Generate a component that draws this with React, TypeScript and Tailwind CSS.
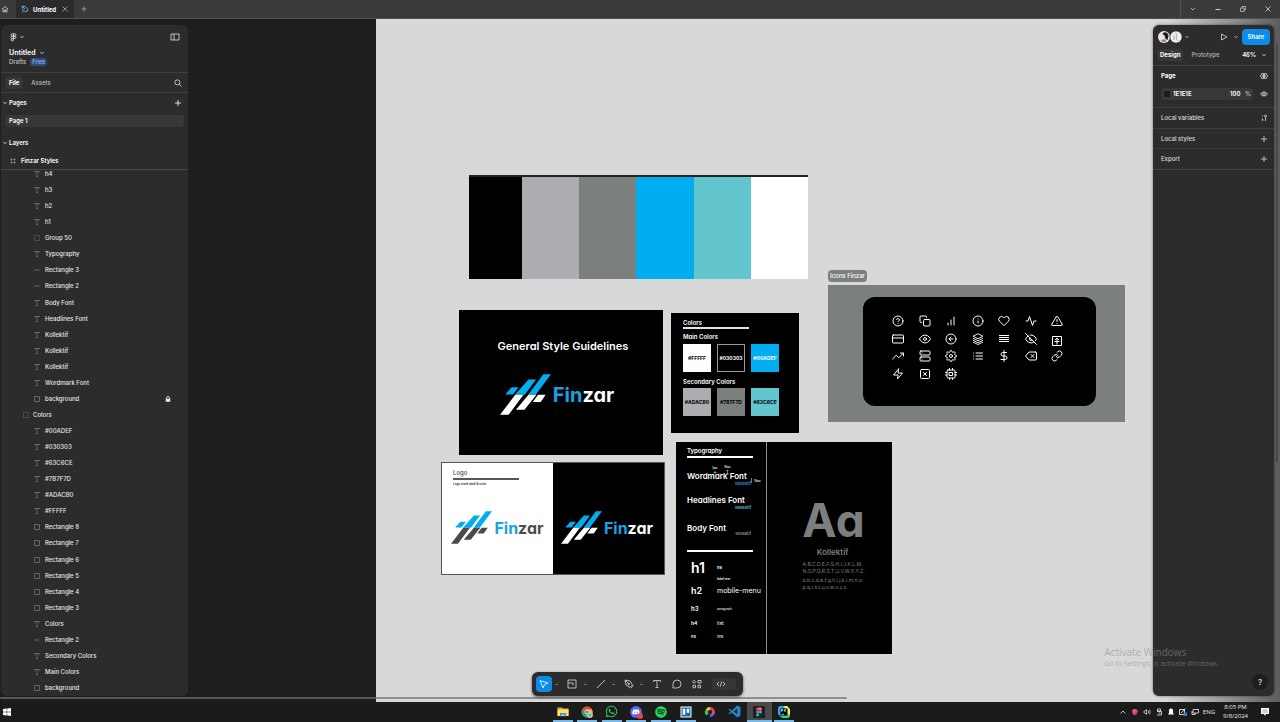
import React from "react";
import {
  FiActivity, FiAlertTriangle, FiArrowLeftCircle, FiBarChart, FiCopy, FiCpu, FiCreditCard,
  FiDelete, FiDollarSign, FiEye, FiEyeOff, FiHeart, FiHelpCircle, FiInfo, FiLink, FiList, FiServer,
  FiSettings, FiTrendingUp, FiXSquare, FiZap,
} from "react-icons/fi";
import { FaDiscord, FaSpotify, FaTrello, FaWhatsapp } from "react-icons/fa";

type Kind = "text" | "rect" | "group" | "line";
type Layer = { name: string; kind: Kind; top?: boolean; locked?: boolean };

const layers: Layer[] = [
  { name: "h4", kind: "text" },
  { name: "h3", kind: "text" },
  { name: "h2", kind: "text" },
  { name: "h1", kind: "text" },
  { name: "Group 50", kind: "group" },
  { name: "Typography", kind: "text" },
  { name: "Rectangle 3", kind: "line" },
  { name: "Rectangle 2", kind: "line" },
  { name: "Body Font", kind: "text" },
  { name: "Headlines Font", kind: "text" },
  { name: "Kollektif", kind: "text" },
  { name: "Kollektif", kind: "text" },
  { name: "Kollektif", kind: "text" },
  { name: "Wordmark Font", kind: "text" },
  { name: "background", kind: "rect", locked: true },
  { name: "Colors", kind: "group", top: true },
  { name: "#00ADEF", kind: "text" },
  { name: "#030303", kind: "text" },
  { name: "#63C6CE", kind: "text" },
  { name: "#7B7F7D", kind: "text" },
  { name: "#ADACB0", kind: "text" },
  { name: "#FFFFF", kind: "text" },
  { name: "Rectangle 8", kind: "rect" },
  { name: "Rectangle 7", kind: "rect" },
  { name: "Rectangle 6", kind: "rect" },
  { name: "Rectangle 5", kind: "rect" },
  { name: "Rectangle 4", kind: "rect" },
  { name: "Rectangle 3", kind: "rect" },
  { name: "Colors", kind: "text" },
  { name: "Rectangle 2", kind: "line" },
  { name: "Secondary Colors", kind: "text" },
  { name: "Main Colors", kind: "text" },
  { name: "background", kind: "rect" },
];

const kindPaths: Record<Kind, string> = {
  text: "M1.5 2.5v-1h5v1M4 1.5v5M3 6.5h2",
  rect: "M1.5 1.5h5v5h-5z",
  group: "M1.5 1.5h5v5h-5z",
  line: "M1.5 4h5",
};

function Glyph({ d, box = 8, className = "size-2", width = 1 }: { d: string; box?: number; className?: string; width?: number }) {
  return (
    <svg viewBox={`0 0 ${box} ${box}`} className={`shrink-0 ${className}`} fill="none" stroke="currentColor" strokeWidth={width} aria-hidden="true">
      <path d={d} />
    </svg>
  );
}

function Chevron({ className = "size-1" }: { className?: string }) {
  return <Glyph box={4} d="M.5 1.2 2 2.7 3.5 1.2" width={0.8} className={className} />;
}

function Plus() {
  return <Glyph d="M4 1v6M1 4h6" width={0.8} />;
}

function LayerRow({ layer }: { layer: Layer }) {
  return (
    <li className="flex min-h-3 flex-1">
      <button type="button" className={`flex w-full items-center gap-[3px] pr-4 text-left font-medium ${layer.top ? "pl-[21px]" : "pl-8"}`}>
        <svg viewBox="0 0 8 8" className="size-2 shrink-0 text-[#808080]" fill="none" stroke="currentColor" strokeWidth="0.7" strokeDasharray={layer.kind === "group" ? "1 1" : undefined} aria-hidden="true">
          <path d={kindPaths[layer.kind]} />
        </svg>
        <span className={layer.top ? "flex-1" : "ml-px flex-1"}>{layer.name}</span>
        {layer.locked && (
          <svg viewBox="0 0 8 8" className="size-2" aria-hidden="true">
            <path d="M2.6 4V2.9a1.4 1.4 0 0 1 2.8 0V4" fill="none" stroke="#e6e6e6" strokeWidth="0.9" />
            <path d="M1.7 3.8h4.6v3H1.7z" fill="#e6e6e6" />
          </svg>
        )}
      </button>
    </li>
  );
}

function TitleBar() {
  return (
    <header className="flex h-[19px] shrink-0 items-stretch border-b border-[#505050] bg-[#3a3a3a] text-[6px] text-[#d0d0d0]">
      <button type="button" aria-label="Home" className="flex w-4 items-center pl-px">
        <Glyph d="M1 4.2 4 1.4l3 2.8M2 3.5V7h1.4V5h1.3v2H6V3.5" width={0.8} />
      </button>
      <div className="flex w-[58px] items-center bg-[#2b2b2b] pl-[5px] text-white">
        <svg viewBox="0 0 8 8" className="size-2" fill="none" stroke="#6fb5e8" strokeWidth="0.8" aria-hidden="true">
          <path d="M1 1l3.600.8 2.400 3L5 7 2 5.200zM1 1l3 3M5 7l2.500-2.200M1 6.500l1.500.8" />
        </svg>
        <span className="ml-1 flex-1 font-bold">Untitled</span>
        <button type="button" aria-label="Close tab" className="mr-[5px] text-[#c0c0c0]"><Glyph d="M1.500 1.500l5 5M6.500 1.500l-5 5" width={0.7} /></button>
      </div>
      <button type="button" aria-label="New tab" className="ml-[6px] text-[#b5b5b5]"><Glyph d="M4 1.5v5M1.5 4h5" width={0.7} /></button>
      <div className="ml-auto flex items-center gap-[17px] border-l border-[#555] pr-2 pl-2">
        <button type="button" aria-label="More"><Glyph d="M2 3l2 2 2-2" width={0.7} /></button>
        <button type="button" aria-label="Minimize"><Glyph d="M1.5 4.5h5" /></button>
        <button type="button" aria-label="Restore"><Glyph d="M1.5 3h3.5v3.5H1.5zM3 3V1.5h3.5V5H5" width={0.7} /></button>
        <button type="button" aria-label="Close"><Glyph d="M1.5 1.5l5 5M6.5 1.5l-5 5" width={0.8} /></button>
      </div>
    </header>
  );
}

function LeftPanel() {
  return (
    <aside className="pointer-events-auto ml-px flex w-[187px] flex-col overflow-hidden rounded-md bg-[#2c2c2c] text-[6px] leading-2 text-[#e6e6e6]">
      <div className="flex h-12 flex-col border-b border-[#3d3d3d] px-2 pt-2">
        <div className="flex h-2 items-center justify-between">
          <button type="button" aria-label="Main menu" className="flex items-center gap-[2px]">
            <svg viewBox="0 0 9 9" className="size-[9px]" fill="none" stroke="currentColor" strokeWidth="0.8" aria-hidden="true">
              <path d="M4.5.8H3.2a1.2 1.2 0 0 0 0 2.4h1.3zM4.5.8h1.3a1.2 1.2 0 0 1 0 2.4H4.5zM4.5 3.2H3.2a1.2 1.2 0 0 0 0 2.4h1.3zM4.5 5.6H3.2a1.2 1.2 0 1 0 1.3 1.2z" />
              <circle cx="5.8" cy="4.4" r="1.2" />
            </svg>
            <Chevron />
          </button>
          <button type="button" aria-label="Toggle sidebar">
            <Glyph box={10} className="size-[10px]" d="M1 2h8v6H1zM4 2v6" width={0.8} />
          </button>
        </div>
        <div className="mt-2 flex items-center gap-1 text-[7px] font-semibold text-white">Untitled <Chevron /></div>
        <div className="mt-px flex items-center gap-1 text-[#c4c4c4]">
          Drafts <span className="rounded-sm bg-[#324b79] px-[2px] text-[#7cc0f5]">Free</span>
        </div>
      </div>
      <div className="flex h-5 items-center border-b border-[#3d3d3d] px-1">
        <button type="button" className="rounded-sm bg-[#373737] px-1 py-[2px] font-bold text-white">File</button>
        <button type="button" className="ml-2 text-[#bdbdbd]">Assets</button>
        <button type="button" aria-label="Search" className="mr-[2px] ml-auto"><Glyph d="M5.9 3.4a2.5 2.5 0 1 1-5 0 2.500 2.500 0 0 1 5 0zM5.200 5.200 7.500 7.500" width={0.8} /></button>
      </div>
      <div className="flex h-5 items-center pr-[6px] pl-[2px] font-semibold text-white">
        <Chevron /><span className="ml-[2px] flex-1">Pages</span>
        <button type="button" aria-label="Add page"><Plus /></button>
      </div>
      <button type="button" className="mx-1 mt-[2px] rounded-sm bg-[#383838] px-1 py-[2px] text-left font-semibold text-white">Page 1</button>
      <div className="mt-[6px] flex h-5 items-center pl-[2px] font-semibold text-white"><Chevron /><span className="ml-[2px]">Layers</span></div>
      <button type="button" className="flex h-[17px] items-center gap-1 border-b border-[#484848] pl-2 text-left font-semibold text-white">
        <span className="text-[#9a9a9a]"><Glyph d="M2.5 1v6M5.5 1v6M1 2.5h6M1 5.5h6" width={0.5} /></span>Finzar Styles
      </button>
      <div className="flex min-h-0 flex-1 flex-col overflow-hidden">
        <ul className="-mt-1 flex flex-1 flex-col">
          {layers.map((l, i) => <LayerRow key={i} layer={l} />)}
        </ul>
      </div>
    </aside>
  );
}

function RightPanel() {
  return (
    <aside className="pointer-events-auto mr-[6px] flex w-[121px] flex-col rounded-md bg-[#2c2c2c] text-[6px] leading-2 text-[#dcdcdc] shadow-[0_0_3px_rgba(0,0,0,0.5)]">
      <div className="flex h-[23px] items-center pr-1 pl-1">
        <svg viewBox="0 0 26 14" className="h-[14px] w-[26px]" aria-hidden="true">
          <circle cx="7" cy="7" r="6" fill="#e9e4df" />
          <path d="M5.500 4c1-3 6-2 6 2l-1 4-2-1-1-3.500z" fill="#221d1b" />
          <path d="M4 10.500c2 2 4 2 5.500.5l-2.500-2z" fill="#8d8078" />
          <circle cx="19" cy="7" r="6" fill="#f1f1f1" stroke="#2c2c2c" strokeWidth="0.6" />
          <path d="M18 3c3 0 2 3 1 5l2 3M17 5v5" fill="none" stroke="#8c8c8c" strokeWidth="0.8" />
        </svg>
        <span className="ml-[2px]"><Chevron /></span>
        <button type="button" aria-label="Present" className="mr-[6px] ml-auto"><Glyph d="M1.5 1 7 4 1.5 7z" width={0.8} /></button>
        <Chevron />
        <button type="button" className="ml-1 h-4 w-7 rounded-sm bg-[#0c8ce9] font-semibold text-white">Share</button>
      </div>
      <div className="flex h-[18px] items-center border-b border-[#3f3f3f] pr-2 pb-[3px] pl-1">
        <button type="button" className="rounded-sm bg-[#383838] px-[3px] py-[2px] font-bold text-white">Design</button>
        <button type="button" className="ml-2 text-[#b5b5b5]">Prototype</button>
        <button type="button" className="ml-auto flex items-center gap-[6px] font-semibold text-white">46% <Chevron /></button>
      </div>
      <div className="flex h-[42px] flex-col border-b border-[#3f3f3f] pt-[6px] pr-[6px] pl-2">
        <div className="flex items-center justify-between font-bold text-white">
          Page
          <Glyph d="M3.5 1.500H1.800L.5 4l1.300 2.500h1.700zM4.500 1.500h1.700L7.500 4 6.200 6.500H4.500zM2 4h1.500M4.500 4H6" width={0.7} />
        </div>
        <div className="mt-2 flex items-center justify-between">
          <div className="flex h-3 w-[92px] items-center rounded-sm bg-[#383838] font-semibold text-white">
            <span className="ml-[3px] size-[6px] rounded-[1px] bg-[#1e1e1e]" />
            <input aria-label="Page color" defaultValue="1E1E1E" className="ml-[3px] w-[52px] min-w-0 bg-transparent outline-none" />
            <input aria-label="Opacity" defaultValue="100" className="w-5 min-w-5 border-l border-[#2c2c2c] bg-transparent pl-1 outline-none" />
            <span className="text-[#bdbdbd]">%</span>
          </div>
          <button type="button" aria-label="Toggle visibility"><Glyph d="M.5 4C2 1.5 6 1.5 7.5 4 6 6.5 2 6.5.5 4zM5.2 4a1.2 1.2 0 1 1-2.4 0 1.2 1.2 0 0 1 2.4 0z" width={0.8} /></button>
        </div>
      </div>
      <div className="flex h-[21px] items-center justify-between border-b border-[#3f3f3f] pr-[6px] pl-2">
        Local variables
        <button type="button" aria-label="Variables"><Glyph d="M2.5 4.5v2M2.5 1.5v1M5.5 3.5V7M4.5 2.2a1 1 0 1 1 2 0 1 1 0 0 1-2 0zM1.8 6h1.5" width={0.8} /></button>
      </div>
      <div className="flex h-5 items-center justify-between border-b border-[#353535] pr-[6px] pl-2">
        Local styles
        <button type="button" aria-label="Add style"><Plus /></button>
      </div>
      <div className="flex h-[21px] items-center justify-between border-b border-[#3f3f3f] pr-[6px] pl-2">
        Export
        <button type="button" aria-label="Add export"><Plus /></button>
      </div>
      <button type="button" aria-label="Help" className="mt-auto mr-[6px] mb-[6px] size-4 self-end rounded-full bg-[#1e1e1e] text-[8px] font-medium">?</button>
    </aside>
  );
}

function Mark({ base, className }: { base: string; className: string }) {
  return (
    <svg viewBox="0 0 154 124" className={className} aria-hidden="true">
      <path fill="#00adef" d="M35 40h21L39 62H16zM86 17h23L75 63H45zM131 1h23l-46 62H85z" />
      <path fill={base} d="M46 63h25L26 123H0zM86 63h24l-36 45H48zM115 63h23l-15 22H99z" />
    </svg>
  );
}

function Brand({ dark, big }: { dark: boolean; big?: boolean }) {
  return (
    <div className={`flex items-center justify-center gap-[2px] font-bold ${big ? "text-[20px]" : "text-[16px]"}`}>
      <Mark base={dark ? "#ffffff" : "#4d494b"} className={big ? "h-[41px] w-[51px]" : "h-[33px] w-[41px]"} />
      <span className={dark ? "text-white" : "text-[#4d494b]"}><span className="text-[#16a3e0]">Fin</span>zar</span>
    </div>
  );
}

function LayersStack() {
  return (
    <svg viewBox="0 0 24 24" className="size-3" fill="none" stroke="currentColor" strokeWidth="1.8" strokeLinejoin="round" aria-hidden="true">
      <path d="M12 1.5 2 6.5l10 5 10-5zM2 10.5l10 5 10-5M2 14.5l10 5 10-5M2 18l10 5 10-5" />
    </svg>
  );
}

function Lines() {
  return (
    <svg viewBox="0 0 12 12" className="size-3" fill="none" stroke="currentColor" strokeWidth="1" aria-hidden="true">
      <path d="M1 2.5h10M1 4.500h10M1 6.500h10M1 8.500h10" />
    </svg>
  );
}

function DepositBox() {
  return (
    <svg viewBox="0 0 12 12" className="mt-[2px] size-3" fill="none" stroke="currentColor" strokeWidth="1" aria-hidden="true">
      <path d="M1.5 1.500h9v9h-9zM6 3v6.500M3.500 6.500h5M4 5l2-2 2 2" />
    </svg>
  );
}

function IconBoard() {
  const c = "size-3";
  return (
    <div className="grid grid-cols-[repeat(7,12px)] content-between justify-between text-white">
      <FiHelpCircle className={c} /><FiCopy className={c} /><FiBarChart className={c} /><FiInfo className={c} /><FiHeart className={c} /><FiActivity className={c} /><FiAlertTriangle className={c} />
      <FiCreditCard className={c} /><FiEye className={c} /><FiArrowLeftCircle className={c} /><LayersStack /><Lines /><FiEyeOff className={c} /><div className="h-3"><DepositBox /></div>
      <FiTrendingUp className={c} /><FiServer className={c} /><FiSettings className={c} /><FiList className={c} /><FiDollarSign className={c} /><FiDelete className={c} /><FiLink className={c} />
      <FiZap className={c} /><FiXSquare className={c} /><FiCpu className={c} />
    </div>
  );
}

function Canvas() {
  return (
    <main className="relative overflow-hidden bg-[#1e1e1e] [grid-area:1/1]">
      <div className="absolute inset-y-0 right-0 left-[376px] bg-[#d8d8d8]" />
      <div className="absolute inset-y-0 right-0 w-[115px] bg-linear-to-r from-transparent to-[#5c5c5c]" />
      <div className="font-['Inter',sans-serif] [font-feature-settings:'cv11']">
        <section className="absolute top-[156px] left-[469px] grid h-[104px] w-[339px] grid-cols-[53px_repeat(5,1fr)] border-t-2 border-[#222]">
          <div className="bg-black" /><div className="bg-[#adacb0]" /><div className="bg-[#7b7f7d]" /><div className="bg-[#00adef]" /><div className="bg-[#63c6ce]" /><div className="bg-white" />
        </section>

        <section className="absolute top-[291px] left-[459px] flex h-[145px] w-[204px] flex-col items-center bg-black pt-7 pl-1 text-white">
          <h2 className="text-[11px] leading-4 font-semibold">General Style Guidelines</h2>
          <div className="mt-5 mr-3"><Brand dark big /></div>
        </section>

        <section className="absolute top-[294px] left-[671px] flex h-[120px] w-[128px] flex-col bg-black pt-[6px] pl-3 text-[6px] leading-2 font-semibold text-white">
          <h2>Colors</h2>
          <div className="h-[2px] w-[66px] bg-[#dfe6e6]" />
          <h3 className="mt-1">Main Colors</h3>
          <div className="mt-[3px] flex gap-[6px] text-[5px] font-bold">
            <div className="flex size-7 items-center justify-center bg-white text-black">#FFFFF</div>
            <div className="flex size-7 items-center justify-center border border-[#999]">#030303</div>
            <div className="flex size-7 items-center justify-center bg-[#00adef]">#00ADEF</div>
          </div>
          <h3 className="mt-[6px]">Secondary Colors</h3>
          <div className="mt-[2px] flex gap-[6px] text-[5px] font-bold text-black">
            <div className="flex size-7 items-center justify-center bg-[#adacb0]">#ADACB0</div>
            <div className="flex size-7 items-center justify-center bg-[#7b7f7d]">#7B7F7D</div>
            <div className="flex size-7 items-center justify-center bg-[#63c6ce]">#63C6CE</div>
          </div>
        </section>

        <section className="absolute top-[443px] left-[441px] grid h-[113px] w-[224px] grid-cols-2 border border-[#555]">
          <div className="flex flex-col bg-white pt-[6px] text-[#4d494b]">
            <div className="pl-[11px]">
              <h2 className="text-[6px] leading-2 font-medium">Logo</h2>
              <div className="mt-px h-[2px] w-[66px] bg-[#5a5658]" />
              <p className="text-[3px] leading-2 text-black">Logo mark dark &amp; color</p>
            </div>
            <div className="mt-[23px]"><Brand dark={false} /></div>
          </div>
          <div className="flex flex-col bg-black pt-[48px] pr-[3px]"><Brand dark /></div>
        </section>

        <section className="absolute top-[423px] left-[676px] flex h-[212px] w-[216px] bg-black text-white">
          <div className="relative flex w-[91px] shrink-0 flex-col border-r border-[#8a8d8b] pt-[5px] pl-[11px]">
            <h2 className="text-[6px] leading-2 font-semibold">Typography</h2>
            <div className="mt-px h-[2px] w-[66px] bg-white" />
            <div className="mt-[14px] flex w-[64px] flex-col whitespace-nowrap">
              <span className="text-[8px] leading-2 font-semibold">Wordmark Font</span>
              <span className="self-end text-[4px] leading-2 font-semibold text-[#1ca4e4]">Kollektif</span>
              <span className="mt-2 text-[8px] leading-2 font-semibold">Headlines Font</span>
              <span className="self-end text-[4px] leading-2 font-semibold text-[#63c6ce]">Kollektif</span>
              <span className="mt-3 text-[8px] leading-2 font-semibold">Body Font</span>
              <span className="-mt-[2px] self-end text-[4px] leading-2 text-[#adacb0]">Kollektif</span>
            </div>
            <div className="mt-3 h-[2px] w-[66px] bg-white" />
            <div className="mt-2 grid grid-cols-[26px_1fr] items-center pl-1 text-[4px] leading-1 font-semibold whitespace-nowrap">
              <span className="text-[14px] leading-4">h1</span><span>h6</span>
              <span className="h-[7px]" /><span className="h-[7px] text-[3px] leading-[7px]">label text</span>
              <span className="text-[9px] leading-4">h2</span><span className="text-[7px] leading-4 font-normal">mobile-menu</span>
              <span className="mt-1 text-[6px] leading-3">h3</span><span className="mt-1 text-[3px] font-normal">paragraph</span>
              <span className="text-[5px] leading-4">h4</span><span className="text-[5px] font-normal">list</span>
              <span className="text-[4px] leading-3">h5</span><span className="font-normal">link</span>
            </div>
            <span className="absolute top-[24px] left-[36px] text-[3px] leading-1">3px</span>
            <span className="absolute top-[23px] left-[48px] text-[3px] leading-1">16px</span>
            <svg viewBox="0 0 40 16" className="absolute top-[28px] left-[36px] h-4 w-10" fill="none" stroke="#cfcfcf" strokeWidth="0.6" aria-hidden="true">
              <path d="M3 1v3M1.5 2.5h3M15.5 0v4M14 0h3M14 4h3" /><path d="M39.5 8v5" />
            </svg>
            <span className="absolute top-[37px] left-[78px] text-[3px] leading-1">16px</span>
          </div>
          <div className="flex flex-1 flex-col items-center pt-[55px] pl-4 text-[#7b7f7d]">
            <div className="mr-[8px] text-[46px] leading-[46px] font-bold">Aa</div>
            <div className="mr-[10px] text-[8px] leading-[18px] font-semibold">Kollektif</div>
            <div className="w-[70px] text-[5px] leading-[7px] font-normal whitespace-nowrap">
              <p>A.B.C.D.E.F.G.H.I.J.K.L.M.</p>
              <p>N.O.P.Q.R.S.T.U.V.W.X.Y.Z.</p>
              <p className="mt-[2px]">a.b.c.d.e.f.g.h.i.j.k.l.m.n.o.</p>
              <p>p.q.r.s.t.u.v.w.x.y.z.</p>
            </div>
          </div>
        </section>
      </div>

      <span className="absolute top-[251px] left-[828px] rounded-sm bg-[#7b7f7d] px-[2px] py-[2px] text-[6px] leading-2 text-white">Icons Finzar</span>
      <section className="absolute top-[266px] left-[828px] flex h-[137px] w-[297px] bg-[#7b7f7d] pt-3 pr-[29px] pb-4 pl-[35px]">
        <div className="grid flex-1 rounded-xl bg-black pt-[18px] pr-[33px] pb-[26px] pl-[29px]"><IconBoard /></div>
      </section>

      <div className="absolute right-0 bottom-[3px] left-0 h-[2px] pr-[433px]"><div className="h-full rounded-full bg-[#707070]/70" /></div>
      <div className="absolute top-6 right-[2px] bottom-[35%] w-[2px] rounded-full bg-[#4a4a4a]" />
    </main>
  );
}

function Toolbar() {
  return (
    <div className="pointer-events-none absolute inset-x-0 bottom-[6px] flex justify-center pr-[5px]">
      <nav className="pointer-events-auto flex h-6 w-[211px] items-center rounded-md bg-[#2c2c2c] pl-1 text-[#dcdcdc] shadow-[0_1px_3px_rgba(0,0,0,0.6)]">
        <button type="button" aria-label="Move" className="flex size-4 items-center justify-center rounded-sm bg-[#0c8ce9] text-white"><Glyph box={10} className="size-[10px]" d="M1 1.5l8 2.5-3.5 1.500L4 9z" width={0.8} /></button>
        <span className="ml-[3px]"><Chevron className="size-[3px]" /></span>
        <button type="button" aria-label="Frame" className="ml-[9px]"><Glyph box={10} className="size-[10px]" d="M1 1h8v8H1zM1 4h5v2.5" width={0.8} /></button>
        <span className="ml-[7px]"><Chevron className="size-[3px]" /></span>
        <button type="button" aria-label="Line" className="ml-[9px]"><Glyph box={10} className="size-[10px]" d="M1 9 9 1" width={0.8} /></button>
        <span className="ml-[6px]"><Chevron className="size-[3px]" /></span>
        <button type="button" aria-label="Pen" className="ml-[9px]"><Glyph box={10} className="size-[10px]" d="M1 1l5 1 2.5 4L6 8.5 2 6zM1 1l3.5 3.5M5.5 5a.8.8 0 1 1-1.6 0 .8.8 0 0 1 1.6 0zM6.5 9.3 9.3 6.5" width={0.8} /></button>
        <span className="ml-[6px]"><Chevron className="size-[3px]" /></span>
        <button type="button" aria-label="Text" className="ml-[9px]"><Glyph box={10} className="size-[10px]" d="M1.5 3V1.5h7V3M5 1.5v7M3.5 8.5h3" width={0.8} /></button>
        <button type="button" aria-label="Comment" className="ml-[10px]"><Glyph box={10} className="size-[10px]" d="M1 9V5a4 4 0 1 1 4 4z" width={0.8} /></button>
        <button type="button" aria-label="Actions" className="ml-[10px]"><Glyph box={10} className="size-[10px]" d="M.5 2.800l1.600-1.600 1.600 1.600-1.600 1.600zM6 1.500h3v2.500H6zM1 6.300h2.500v2.500H1zM6 6.300h2.500v2.500H6z" width={0.8} /></button>
        <button type="button" aria-label="Dev mode" className="ml-[10px] flex h-3 w-[24px] items-center rounded-sm bg-[#363636] pl-1"><Glyph box={10} className="size-[10px]" d="M3 3 1 5l2 2M7 3l2 2-2 2M5.7 2.5l-1.4 5" width={0.8} /></button>
      </nav>
    </div>
  );
}

const apps: { label: string; open: boolean; active?: boolean; icon: React.ReactNode }[] = [
  { label: "File Explorer", open: true, icon: <svg viewBox="0 0 12 12" className="size-3"><path fill="#e9a92c" d="M.5 1.5H5l1 1h5.5V10H.5z" /><path fill="#fbdc77" d="M.5 3.5h11V10H.5z" /><path fill="#3f8fd2" d="M3 7h6v3.5H7.5V8.5h-3v2H3z" /></svg> },
  { label: "Chrome", open: true, icon: <svg viewBox="0 0 12 12" className="size-3"><circle cx="6" cy="6" r="5.5" fill="#34a853" /><path fill="#ea4335" d="M1 3.5a5.7 5.7 0 0 1 10 0H6L3.5 7z" /><path fill="#fbbc05" d="M6 3.5h5A5.5 5.5 0 0 1 6.5 11.5L8.5 7z" /><circle cx="6" cy="6" r="2.4" fill="#fff" /><circle cx="6" cy="6" r="1.8" fill="#4285f4" /><circle cx="9" cy="9" r="2.9" fill="#c3c8ca" /><path d="M7.5 8.5h3M8 10h2" stroke="#6b7276" strokeWidth=".7" /></svg> },
  { label: "WhatsApp", open: true, icon: <FaWhatsapp className="size-[13px] text-[#25d366]" /> },
  { label: "Discord", open: true, icon: <span className="relative flex size-3 items-center justify-center rounded-full bg-[#5865f2]"><FaDiscord className="size-2 text-white" /><span className="absolute -right-px -bottom-px size-[6px] rounded-full bg-[#ed4245]" /></span> },
  { label: "Spotify", open: true, icon: <FaSpotify className="size-3 text-[#1ed760]" /> },
  { label: "Trello", open: true, icon: <svg viewBox="0 0 12 12" className="size-3"><path fill="#fff" d="M.5.5h11v11H.5z" /><path fill="#0b6fa8" d="M1.500 1.500h9v9h-9z" /><path fill="#fff" d="M2.700 2.700h2.600v6H2.700zM6.700 2.700h2.600v4H6.700z" /></svg> },
  { label: "Color picker", open: false, icon: <svg viewBox="0 0 12 12" className="size-3" fill="none" strokeWidth="3"><path stroke="#f23d3d" d="M6 2.5A3.5 3.5 0 0 1 9.5 6" /><path stroke="#f4c52d" d="M3 4.2A3.5 3.5 0 0 1 6 2.5" /><path stroke="#35c759" d="M3.500 8.500A3.500 3.500 0 0 1 3 4.200" /><path stroke="#d63bd0" d="M9.500 6A3.500 3.500 0 0 1 8 9" /><path stroke="#3478f6" d="M8 9a3.500 3.500 0 0 1-2 .5" /></svg> },
  { label: "Visual Studio Code", open: false, icon: <svg viewBox="0 0 12 12" className="size-[13px]"><path fill="#2489ca" d="M8.5.5 11.5 2v8l-3 1.5L3.500 7l-2 1.500L.5 8l2-2-2-2 1-.5 2 1.500zM8.500 3.500 5.300 6l3.200 2.500z" fillRule="evenodd" /></svg> },
  { label: "Figma", open: true, active: true, icon: <svg viewBox="0 0 12 12" className="size-3"><path fill="#1e1e1e" d="M0 0h12v12H0z" /><path fill="#f24e1e" d="M6 1.5H4.5a1.5 1.5 0 0 0 0 3H6z" /><path fill="#ff7262" d="M6 1.5h1.5a1.5 1.5 0 0 1 0 3H6z" /><path fill="#a259ff" d="M6 4.5H4.5a1.5 1.5 0 0 0 0 3H6z" /><circle cx="7.5" cy="6" r="1.5" fill="#1abcfe" /><path fill="#0acf83" d="M6 7.5H4.5A1.5 1.5 0 1 0 6 9z" /></svg> },
  { label: "PyCharm", open: true, icon: <svg viewBox="0 0 12 12" className="size-3"><path fill="#2aa8f0" d="M0 1.500 1.500 0H9l3 3v7l-2 2H4L0 8z" /><path fill="#fcf84a" d="M6 0h3l3 3.500V9l-2 1z" /><path fill="#21d789" d="M3 10l7-1 2-1v2l-2 2H4z" /><path fill="#000" d="M2.500 2.500h7v7h-7z" /><path d="M3.500 5.500v-2h1.300v1.300H3.500M8 3.700H6.500v1.500H8M3.500 8.300H6" fill="none" stroke="#fff" strokeWidth=".7" /></svg> },
];

function Taskbar() {
  return (
    <footer className="relative flex h-5 shrink-0 items-stretch justify-end bg-[#1b1b1b] text-[#ededed]">
      <button type="button" aria-label="Start" className="mr-auto ml-[3px] self-center">
        <svg viewBox="0 0 8 8" className="size-2"><path fill="#fff" d="M0 1l3.800-.5v3.300H0zM4.200.4 8 0v3.800H4.200zM0 4.200h3.800v3.300L0 7zM4.200 4.200H8V8l-3.800-.5z" /></svg>
      </button>
      <div className="absolute inset-y-0 left-[43%] grid w-[246px] grid-cols-10">
        {apps.map((a) => (
          <button key={a.label} type="button" aria-label={a.label} className={`flex flex-col items-center ${a.active ? "bg-[#4a4a4a]" : ""}`}>
            <span className="flex flex-1 items-center justify-center pt-px">{a.icon}</span>
            <span className={`h-[2px] ${a.active ? "w-full" : "w-5"} ${a.open ? "bg-[#76b9ed]" : ""}`} />
          </button>
        ))}
      </div>
      <div className="flex items-center gap-1 pr-[10px] font-['Open_Sans',sans-serif] text-[6px]">
        <Glyph d="M1.5 5.5 4 3l2.500 2.500" width={0.8} />
        <svg viewBox="0 0 8 8" className="size-2"><path fill="#e83a8c" d="M1 2l4-1 2 2-2 4-3 0z" /><path fill="#f26a3d" d="M1 2l4-1-2 4z" /><path fill="#8d3cf0" d="M2 7l3 0 1-3z" /></svg>
        <Glyph d="M1 3v2h1l1.5 1.5v-5L2 3zM5 2.5q1 1.5 0 3M6.5 1.5q1.5 2.5 0 5" width={0.7} />
        <Glyph d="M2.5 1h3v2h-3zM2 3.5h4.500V7H2M3.500 5h2" width={0.8} />
        <svg viewBox="0 0 8 8" className="size-2"><path fill="#fff" d="M4 .5A2 2 0 0 1 6 3v2l1 1.5H1L2 5V3A2 2 0 0 1 4 .5z" /></svg>
        <svg viewBox="0 0 8 8" className="size-2" fill="none" stroke="#fff" strokeWidth=".8"><path d="M.5 1.5h5v5h-5zM2 5l4.5-4.5" /><path fill="#2d7de0" stroke="none" d="M4.5 4.5H8V8H4.5z" /></svg>
        <Glyph d="M2 1.5h5.5V5H2zM1 3v3.5h3M4.5 5v1.5" width={0.8} />
        <span>ENG</span>
        <div className="ml-1 text-center leading-[9px]"><div>8:05 PM</div><div>9/8/2024</div></div>
        <button type="button" aria-label="Notifications" className="ml-2">
          <svg viewBox="0 0 10 10" className="size-[10px]"><path fill="#fff" d="M1 1h8v6H6L5 9 4 7H1z" /><path d="M2.5 3h5M2.5 5h5" stroke="#555" strokeWidth=".6" /></svg>
        </button>
      </div>
    </footer>
  );
}

export default function App() {
  return (
    <div className="flex h-screen flex-col overflow-hidden bg-[#1e1e1e] font-['Inter',sans-serif] font-medium">
      <TitleBar />
      <div className="relative grid min-h-0 flex-1">
        <Canvas />
        <div className="pointer-events-none z-10 flex min-h-0 justify-between pt-[6px] pb-[6px] [grid-area:1/1]">
          <LeftPanel />
          <RightPanel />
        </div>
        <div className="pointer-events-none absolute inset-0 z-10"><Toolbar /></div>
        <div className="pointer-events-none absolute right-[61px] bottom-[33px] z-20 font-['Open_Sans',sans-serif] font-normal text-[#8f8f8f]/60">
          <p className="text-[10px] leading-3">Activate Windows</p>
          <p className="text-[7px] leading-[11px]">Go to Settings to activate Windows.</p>
        </div>
      </div>
      <Taskbar />
    </div>
  );
}
